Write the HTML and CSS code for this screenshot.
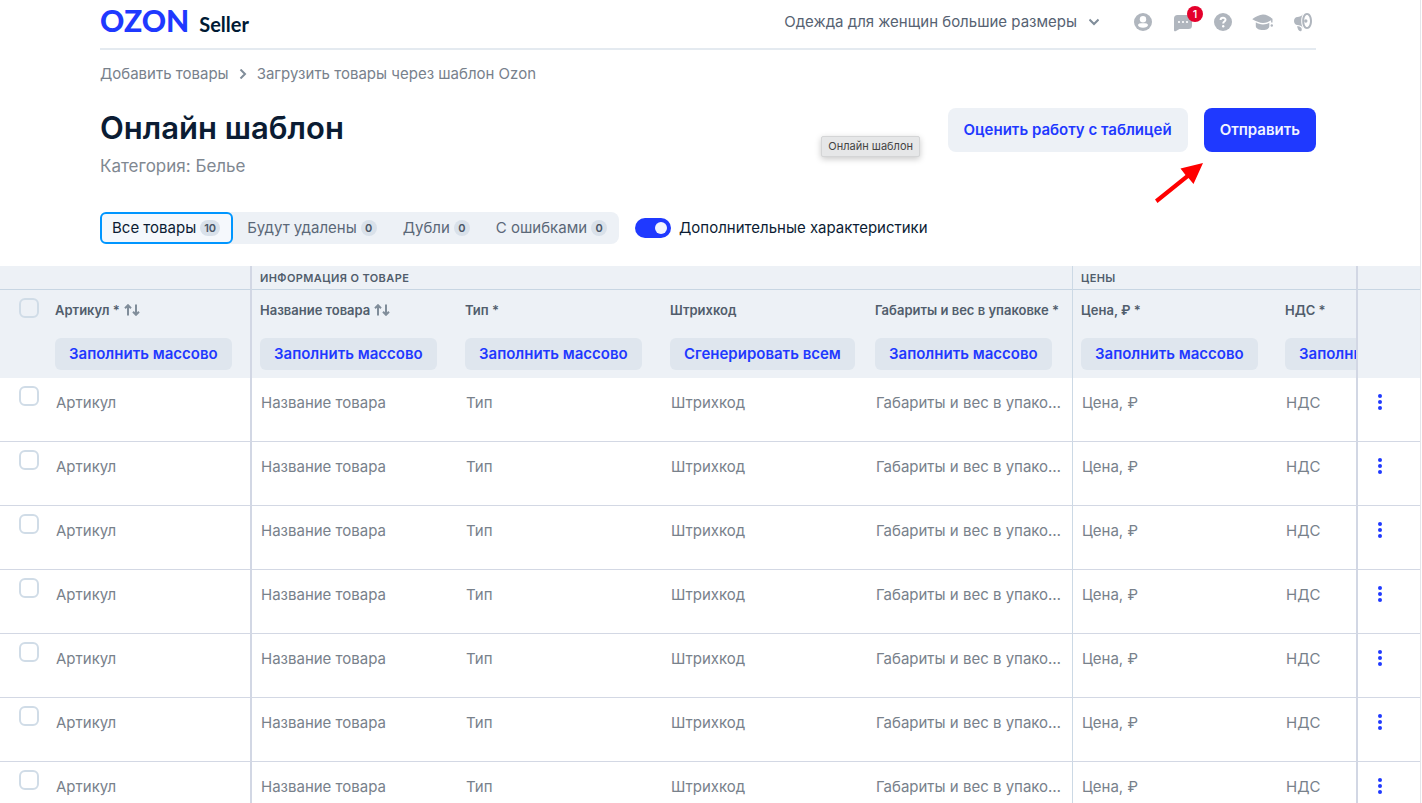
FILE: index.html
```html
<!DOCTYPE html>
<html lang="ru">
<head>
<meta charset="utf-8">
<meta name="viewport" content="width=device-width, initial-scale=1">
<title>Онлайн шаблон</title>
<link rel="stylesheet" href="styles.css">
</head>
<body>
<svg class="sprite" aria-hidden="true">
  <symbol id="dots" viewBox="0 0 4 16"><circle cx="2" cy="2" r="2"/><circle cx="2" cy="8" r="2"/><circle cx="2" cy="14" r="2"/></symbol>
  <symbol id="sort" viewBox="0 0 16 12"><path d="M4 11.5V1.5M1 4.200l3-3 3 3M12 .5v10M9 7.800l3 3 3-3"/></symbol>
</svg>
<div class="page">
  <div class="content">
    <header class="header">
      <a class="logo" href="#"><span class="logo-brand">OZON</span><span class="logo-sub">Seller</span></a>
      <div class="header-right">
        <button class="company" type="button">Одежда для женщин большие размеры
          <svg width="10" height="8" viewBox="0 0 10 8"><path d="M.5 1.500L5 6l4.500-4.500"/></svg>
        </button>
        <nav class="icons">
          <a href="#" aria-label="Профиль"><svg width="20" height="20" viewBox="0 0 20 20"><circle cx="10" cy="10" r="9"/><circle class="cut" cx="10" cy="7.2" r="3.2"/><path class="cut" d="M5 13c0-1.300 1.900-1.700 5-1.700s5 .4 5 1.700c0 1.600-2.300 2.700-5 2.700S5 14.600 5 13z"/></svg></a>
          <a class="messages" href="#" aria-label="Сообщения"><svg width="20" height="20" viewBox="0 0 20 20"><path d="M4.500 3h11A3.500 3.500 0 0 1 19 6.500v7a3.500 3.500 0 0 1-3.500 3.500H6.500L3 19c-1.200.6-2 .1-2-1V6.500A3.500 3.500 0 0 1 4.500 3z"/><circle class="cut" cx="6" cy="10" r="1.100"/><circle class="cut" cx="10" cy="10" r="1.100"/><circle class="cut" cx="14" cy="10" r="1.100"/></svg><span class="unread">1</span></a>
          <a href="#" aria-label="Помощь"><svg width="20" height="20" viewBox="0 0 20 20"><circle cx="10" cy="10" r="9"/><path class="cut-line" d="M7.600 8c0-3 4.900-3 4.900-.2 0 1.700-2.300 1.700-2.300 3.600"/><circle class="cut" cx="10.200" cy="14.300" r="1.200"/></svg></a>
          <a href="#" aria-label="Обучение"><svg width="22" height="20" viewBox="0 0 22 20"><path d="M.8 6.800C3.500 5 7.500 2.500 11 2.500s7.500 2.500 9.500 4.300v3.700h-1.400V8.200c-2.400 1.500-5 2.800-8.100 2.800S3.500 9 .8 7.500c-.4-.2-.4-.5 0-.7z"/><path d="M3.800 10.300c2 1.300 4.500 2.200 7.200 2.200s4.500-.7 6.300-1.700V14c0 2.500-2.300 4-6.300 4s-7.200-1.500-7.200-4z"/><circle cx="19.800" cy="13.500" r="1.200"/></svg></a>
          <a href="#" aria-label="Новости"><svg width="20" height="20" viewBox="0 0 20 20"><path fill-rule="evenodd" d="M14 1c2.900 0 5 3.400 5 8s-2.100 8-5 8-4.800-3.400-4.800-8S11.100 1 14 1zm0 2c-1.600 0-2.800 2.600-2.800 6s1.200 6 2.800 6 3-2.600 3-6-1.400-6-3-6z"/><path d="M10 2C8.500 4.300 6.500 5 4.500 5 2.300 5 1 6.800 1 9s1.300 4 3.500 4c2 0 4 .7 5.500 3-1.200-2-1.800-4.300-1.800-7S8.800 4 10 2z"/><circle cx="12.800" cy="9" r="1.700"/><path d="M4 14.300c2 0 3.200.3 4 1.200.9 1 1 2.500.3 3.500-.9.700-2.600-.2-3.300-1.700z"/></svg></a>
        </nav>
      </div>
    </header>
    <nav class="crumbs">
      <a href="#">Добавить товары</a>
      <svg width="8" height="10" viewBox="0 0 8 10"><path d="M1.500 .5L6 5 1.500 9.500"/></svg>
      <a href="#">Загрузить товары через шаблон Ozon</a>
    </nav>
    <section class="title-row">
      <div>
        <h1 class="title">Онлайн шаблон</h1>
        <p class="category">Категория: Белье</p>
      </div>
      <div class="actions">
        <button class="btn btn-soft" type="button">Оценить работу с таблицей</button>
        <button class="btn btn-main" type="button">Отправить</button>
        <svg class="arrow" width="52" height="42" viewBox="0 0 52 42"><path d="M1 37.500L31.500 13 26.500 6.500 49 1 39.500 22 34.500 16 3.500 41z"/></svg>
        <span class="tooltip" role="tooltip">Онлайн шаблон</span>
      </div>
    </section>
    <section class="filters">
      <div class="tabs">
        <button class="tab tab-active" type="button">Все товары <span class="count">10</span></button>
        <button class="tab" type="button">Будут удалены <span class="count">0</span></button>
        <button class="tab" type="button">Дубли <span class="count">0</span></button>
        <button class="tab" type="button">С ошибками <span class="count">0</span></button>
      </div>
      <label class="switch"><input type="checkbox" role="switch" checked>Дополнительные характеристики</label>
    </section>
  </div>
  <table class="grid">
    <colgroup><col class="c-check"><col class="c-std"><col class="c-std"><col class="c-std"><col class="c-std"><col class="c-dims"><col class="c-price"><col><col class="c-menu"></colgroup>
    <thead>
      <tr class="groups"><th colspan="2" class="edge"></th><th colspan="4" class="line">ИНФОРМАЦИЯ О ТОВАРЕ</th><th colspan="2" class="edge">ЦЕНЫ</th><th></th></tr>
      <tr class="heads">
        <th class="check"><input type="checkbox" aria-label="Выбрать все"></th>
        <th class="edge"><div class="head">Артикул * <svg class="sort"><use href="#sort"/></svg></div><button class="fill" type="button">Заполнить массово</button></th>
        <th><div class="head">Название товара <svg class="sort"><use href="#sort"/></svg></div><button class="fill" type="button">Заполнить массово</button></th>
        <th><div class="head">Тип *</div><button class="fill" type="button">Заполнить массово</button></th>
        <th><div class="head">Штрихкод</div><button class="fill" type="button">Сгенерировать всем</button></th>
        <th class="line"><div class="head">Габариты и вес в упаковке *</div><button class="fill" type="button">Заполнить массово</button></th>
        <th><div class="head">Цена, ₽ *</div><button class="fill" type="button">Заполнить массово</button></th>
        <th class="edge clip"><div class="head">НДС *</div><button class="fill" type="button">Заполнить массово</button></th>
        <th></th>
      </tr>
    </thead>
    <tbody>
      <tr><td class="check"><input type="checkbox" aria-label="Выбрать строку 1"></td><td class="edge"><input class="cell" aria-label="Артикул" placeholder="Артикул"></td><td><input class="cell" aria-label="Название товара" placeholder="Название товара"></td><td><input class="cell" aria-label="Тип" placeholder="Тип"></td><td><input class="cell" aria-label="Штрихкод" placeholder="Штрихкод"></td><td class="line"><input class="cell" aria-label="Габариты и вес в упаковке" placeholder="Габариты и вес в упаковке"></td><td><input class="cell" aria-label="Цена, ₽" placeholder="Цена, ₽"></td><td class="edge"><input class="cell" aria-label="НДС" placeholder="НДС"></td><td class="menu"><button type="button" aria-label="Действия"><svg><use href="#dots"/></svg></button></td></tr>
      <tr><td class="check"><input type="checkbox" aria-label="Выбрать строку 2"></td><td class="edge"><input class="cell" aria-label="Артикул" placeholder="Артикул"></td><td><input class="cell" aria-label="Название товара" placeholder="Название товара"></td><td><input class="cell" aria-label="Тип" placeholder="Тип"></td><td><input class="cell" aria-label="Штрихкод" placeholder="Штрихкод"></td><td class="line"><input class="cell" aria-label="Габариты и вес в упаковке" placeholder="Габариты и вес в упаковке"></td><td><input class="cell" aria-label="Цена, ₽" placeholder="Цена, ₽"></td><td class="edge"><input class="cell" aria-label="НДС" placeholder="НДС"></td><td class="menu"><button type="button" aria-label="Действия"><svg><use href="#dots"/></svg></button></td></tr>
      <tr><td class="check"><input type="checkbox" aria-label="Выбрать строку 3"></td><td class="edge"><input class="cell" aria-label="Артикул" placeholder="Артикул"></td><td><input class="cell" aria-label="Название товара" placeholder="Название товара"></td><td><input class="cell" aria-label="Тип" placeholder="Тип"></td><td><input class="cell" aria-label="Штрихкод" placeholder="Штрихкод"></td><td class="line"><input class="cell" aria-label="Габариты и вес в упаковке" placeholder="Габариты и вес в упаковке"></td><td><input class="cell" aria-label="Цена, ₽" placeholder="Цена, ₽"></td><td class="edge"><input class="cell" aria-label="НДС" placeholder="НДС"></td><td class="menu"><button type="button" aria-label="Действия"><svg><use href="#dots"/></svg></button></td></tr>
      <tr><td class="check"><input type="checkbox" aria-label="Выбрать строку 4"></td><td class="edge"><input class="cell" aria-label="Артикул" placeholder="Артикул"></td><td><input class="cell" aria-label="Название товара" placeholder="Название товара"></td><td><input class="cell" aria-label="Тип" placeholder="Тип"></td><td><input class="cell" aria-label="Штрихкод" placeholder="Штрихкод"></td><td class="line"><input class="cell" aria-label="Габариты и вес в упаковке" placeholder="Габариты и вес в упаковке"></td><td><input class="cell" aria-label="Цена, ₽" placeholder="Цена, ₽"></td><td class="edge"><input class="cell" aria-label="НДС" placeholder="НДС"></td><td class="menu"><button type="button" aria-label="Действия"><svg><use href="#dots"/></svg></button></td></tr>
      <tr><td class="check"><input type="checkbox" aria-label="Выбрать строку 5"></td><td class="edge"><input class="cell" aria-label="Артикул" placeholder="Артикул"></td><td><input class="cell" aria-label="Название товара" placeholder="Название товара"></td><td><input class="cell" aria-label="Тип" placeholder="Тип"></td><td><input class="cell" aria-label="Штрихкод" placeholder="Штрихкод"></td><td class="line"><input class="cell" aria-label="Габариты и вес в упаковке" placeholder="Габариты и вес в упаковке"></td><td><input class="cell" aria-label="Цена, ₽" placeholder="Цена, ₽"></td><td class="edge"><input class="cell" aria-label="НДС" placeholder="НДС"></td><td class="menu"><button type="button" aria-label="Действия"><svg><use href="#dots"/></svg></button></td></tr>
      <tr><td class="check"><input type="checkbox" aria-label="Выбрать строку 6"></td><td class="edge"><input class="cell" aria-label="Артикул" placeholder="Артикул"></td><td><input class="cell" aria-label="Название товара" placeholder="Название товара"></td><td><input class="cell" aria-label="Тип" placeholder="Тип"></td><td><input class="cell" aria-label="Штрихкод" placeholder="Штрихкод"></td><td class="line"><input class="cell" aria-label="Габариты и вес в упаковке" placeholder="Габариты и вес в упаковке"></td><td><input class="cell" aria-label="Цена, ₽" placeholder="Цена, ₽"></td><td class="edge"><input class="cell" aria-label="НДС" placeholder="НДС"></td><td class="menu"><button type="button" aria-label="Действия"><svg><use href="#dots"/></svg></button></td></tr>
      <tr><td class="check"><input type="checkbox" aria-label="Выбрать строку 7"></td><td class="edge"><input class="cell" aria-label="Артикул" placeholder="Артикул"></td><td><input class="cell" aria-label="Название товара" placeholder="Название товара"></td><td><input class="cell" aria-label="Тип" placeholder="Тип"></td><td><input class="cell" aria-label="Штрихкод" placeholder="Штрихкод"></td><td class="line"><input class="cell" aria-label="Габариты и вес в упаковке" placeholder="Габариты и вес в упаковке"></td><td><input class="cell" aria-label="Цена, ₽" placeholder="Цена, ₽"></td><td class="edge"><input class="cell" aria-label="НДС" placeholder="НДС"></td><td class="menu"><button type="button" aria-label="Действия"><svg><use href="#dots"/></svg></button></td></tr>
    </tbody>
  </table>
</div>
</body>
</html>
```
FILE: styles.css
```css
* { box-sizing: border-box; }
body {
  margin: 0;
  background: #fff;
  color: #0b1c33;
  font: 15px/20px Inter, "Liberation Sans", sans-serif;
}
button, input { font: inherit; color: inherit; }
button { border: 0; background: none; padding: 0; cursor: pointer; white-space: nowrap; }
a { color: inherit; text-decoration: none; }
.sprite { position: absolute; width: 0; height: 0; }

.page {
  height: 100vh;
  margin-right: 1px;
  border-right: 1px solid #e4e6ea;
  overflow: hidden;
}
.content { padding: 0 104px 22px 100px; }

.header {
  display: flex;
  justify-content: space-between;
  align-items: center;
  height: 50px;
  padding-bottom: 4px;
  border-bottom: 2px solid #e4eaf0;
}
.logo { display: flex; align-items: baseline; gap: 10px; }
.logo-brand { font: 900 30px/32px Lato, sans-serif; color: #1f39ff; }
.logo-sub { font: 700 20px/32px Lato, sans-serif; color: #001a34; }
.header-right { display: flex; align-items: center; gap: 34px; padding-right: 3px; }
.company { display: flex; align-items: center; gap: 12px; color: #566272; }
.company svg, .crumbs svg { fill: none; stroke: #808d9a; stroke-width: 2; }
.icons { display: flex; gap: 20px; }
.icons a { position: relative; display: flex; justify-content: center; width: 20px; }
.icons svg { flex: none; fill: #b0b6be; }
.icons .cut { fill: #fff; }
.icons .cut-line { fill: none; stroke: #fff; stroke-width: 2; }
.unread {
  position: absolute;
  top: -6px;
  right: -10px;
  width: 16px;
  border-radius: 8px;
  background: #e4002b;
  color: #fff;
  font-size: 11px;
  font-weight: 500;
  line-height: 16px;
  text-align: center;
}

.crumbs { display: flex; align-items: center; gap: 10px; padding: 14px 0 24px; color: #78818c; }

.title-row { display: flex; justify-content: space-between; align-items: flex-start; }
.title { margin: 0; font-size: 31px; font-weight: 600; line-height: 40px; }
.category { margin: 6px 0 0; color: #808891; font-size: 17px; line-height: 24px; }
.actions { position: relative; display: flex; gap: 16px; }
.btn { height: 44px; padding: 0 16px; border-radius: 8px; font-weight: 600; }
.btn-soft { background: #edf1f6; color: #1f39ff; }
.btn-main { background: #1f39ff; color: #f2f4ff; }
.arrow { position: absolute; top: 54px; right: 110px; fill: #f00; }
.tooltip {
  position: absolute;
  top: 28px;
  right: 396px;
  padding: 0 6px;
  border: 1px solid #d4d5d6;
  border-radius: 2px;
  background: #e6e7e8;
  box-shadow: 0 2px 6px rgba(0, 0, 0, .22);
  color: #444;
  font-size: 11px;
  line-height: 19px;
  white-space: nowrap;
}

.filters { display: flex; align-items: center; gap: 16px; margin-top: 34px; }
.tabs { display: flex; border-radius: 8px; background: #edf1f6; }
.tab { display: flex; align-items: center; gap: 4px; height: 32px; padding: 0 12px 0 14px; color: #5b6878; }
.tab-active {
  padding: 0 11px 0 10px;
  border: 2px solid #0096ff;
  border-radius: 6px;
  background: #f5f8fc;
  color: #0b1c33;
}
.count {
  min-width: 16px;
  padding: 0 4px;
  border-radius: 8px;
  background: #d9e1ea;
  color: #4a5565;
  font-size: 11px;
  font-weight: 600;
  line-height: 16px;
  text-align: center;
}
.switch { display: flex; align-items: center; gap: 8px; }
.switch input {
  display: flex;
  align-items: center;
  justify-content: flex-end;
  width: 36px;
  height: 20px;
  margin: 0;
  padding: 4px;
  border-radius: 10px;
  background: #1f39ff;
  appearance: none;
}
.switch input::before { content: ""; width: 12px; height: 12px; border-radius: 50%; background: #f2f4ff; }

.grid { width: 100%; border-collapse: separate; border-spacing: 0; table-layout: fixed; }
.c-check { width: 47px; }
.c-std { width: 205px; }
.c-dims { width: 206px; }
.c-price { width: 204px; }
.c-menu { width: 62px; }
.grid th, .grid td { padding: 0 8px; text-align: left; vertical-align: top; }
.grid th { background: #edf1f6; color: #515d6c; font-weight: 600; }
.grid .edge { border-right: 2px solid #d2d7e4; }
.grid .line { border-right: 1px solid #ccd9e5; }
.grid .clip { overflow: hidden; }
.grid .groups th { height: 24px; padding-top: 2px; border-bottom: 1px solid #c8d6e3; font-size: 11px; line-height: 21px; letter-spacing: .4px; }
.grid .heads th { height: 88px; padding: 10px 8px 8px; font-size: 13px; }
.head { display: flex; align-items: center; gap: 4px; height: 20px; margin-bottom: 18px; white-space: nowrap; }
.sort { width: 16px; height: 12px; fill: none; stroke: #808d9a; stroke-width: 2; }
.fill { display: block; height: 32px; padding: 0 14px; border-radius: 6px; background: #dfe6ee; color: #1f39ff; font-size: 15px; font-weight: 600; }
.grid td { height: 64px; border-bottom: 1px solid #d3d8e4; padding-top: 13px; }
.grid td.check, .grid .heads .check { padding: 8px 0 0 19px; }
.check input {
  display: block;
  width: 20px;
  height: 20px;
  margin: 0;
  border: 2px solid #d0dce7;
  border-radius: 6px;
  appearance: none;
}
.cell {
  display: block;
  width: 100%;
  height: 22px;
  padding: 0 1px;
  border: 0;
  background: none;
  text-overflow: ellipsis;
}
.cell::placeholder { color: #78818b; opacity: 1; }
.grid .menu { padding: 16px 0 0 20px; }
.menu button { display: block; }
.menu svg { display: block; width: 4px; height: 16px; fill: #1f39ff; }
```
